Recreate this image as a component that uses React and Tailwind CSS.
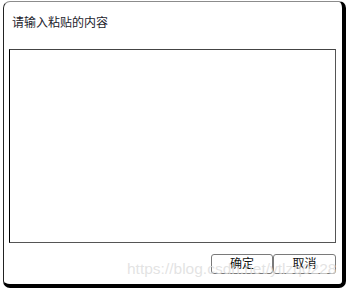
import React from 'react';

export default function App() {
    return (
        <div className="relative w-[348px] h-[290px] bg-white overflow-hidden" style={{ fontFamily: '"Liberation Sans", "Noto Sans CJK SC", sans-serif' }}>
            <div className="ml-[3px] mt-[1px] w-[343px] h-[287px] bg-white rounded-[7px] border-l border-t border-r-4 border-b-4 border-l-[#222] border-t-[#8c8c8c] border-r-black border-b-black flex flex-col">
                <div className="pl-[8px] pt-[13px] h-[47px] text-[12px] leading-[16px] text-[#1c1c2c]">请输入粘贴的内容</div>
                <textarea className="ml-[5px] w-[327px] h-[194px] border border-[#555] border-l-black border-t-[#444] resize-none outline-none bg-white" />
                <div className="flex justify-end pr-[6px] pt-[11px]">
                    <button className="w-[62px] h-[20px] border border-[#7a7a7a] rounded-[3px] bg-white text-[12px] leading-[16px] text-[#111]">确定</button>
                    <button className="w-[63px] h-[20px] border border-[#7a7a7a] rounded-[3px] bg-white text-[12px] leading-[16px] text-[#111]">取消</button>
                </div>
            </div>
            <div className="absolute left-[127px] top-[259px] text-[15.5px] leading-[20px] text-[#dcdcdc]/80 pointer-events-none whitespace-nowrap" style={{ fontFamily: '"Liberation Sans", sans-serif' }}>https://blog.csdn.net/ytlzq0228</div>
        </div>
    );
}
